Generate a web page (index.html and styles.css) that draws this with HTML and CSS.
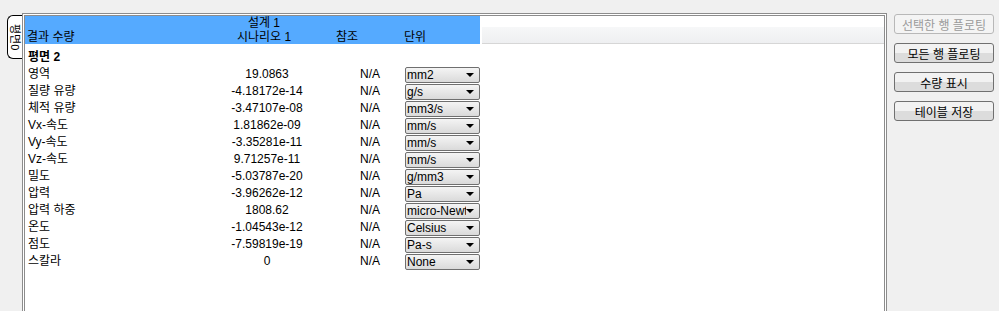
FILE: index.html
```html
<!DOCTYPE html>
<html lang="ko">
<head>
    <meta charset="UTF-8">
    <title>결과 수량</title>
    <link rel="stylesheet" href="styles.css">
</head>
<body>
    <div class="app">
        <!-- Side tab -->
        <div class="tab"><span class="tab-text">평면0</span></div>

        <!-- Results table panel -->
        <div class="panel">
            <div class="head">
                <div class="head-blue">
                    <div class="h-label">결과 수량</div>
                    <div class="h-value">설계 1<br>시나리오 1</div>
                    <div class="h-ref">참조</div>
                    <div class="h-unit">단위</div>
                </div>
                <div class="head-rest"><div class="head-strip"></div></div>
            </div>

            <div class="rows">
                <div class="row group"><span class="c-label">평면 2</span></div>
                <div class="row"><span class="c-label">영역</span><span class="c-value">19.0863</span><span class="c-ref">N/A</span><span class="c-unit"><span class="combo"><span class="combo-text">mm2</span></span></span></div>
                <div class="row"><span class="c-label">질량 유량</span><span class="c-value">-4.18172e-14</span><span class="c-ref">N/A</span><span class="c-unit"><span class="combo"><span class="combo-text">g/s</span></span></span></div>
                <div class="row"><span class="c-label">체적 유량</span><span class="c-value">-3.47107e-08</span><span class="c-ref">N/A</span><span class="c-unit"><span class="combo"><span class="combo-text">mm3/s</span></span></span></div>
                <div class="row"><span class="c-label">Vx-속도</span><span class="c-value">1.81862e-09</span><span class="c-ref">N/A</span><span class="c-unit"><span class="combo"><span class="combo-text">mm/s</span></span></span></div>
                <div class="row"><span class="c-label">Vy-속도</span><span class="c-value">-3.35281e-11</span><span class="c-ref">N/A</span><span class="c-unit"><span class="combo"><span class="combo-text">mm/s</span></span></span></div>
                <div class="row"><span class="c-label">Vz-속도</span><span class="c-value">9.71257e-11</span><span class="c-ref">N/A</span><span class="c-unit"><span class="combo"><span class="combo-text">mm/s</span></span></span></div>
                <div class="row"><span class="c-label">밀도</span><span class="c-value">-5.03787e-20</span><span class="c-ref">N/A</span><span class="c-unit"><span class="combo"><span class="combo-text">g/mm3</span></span></span></div>
                <div class="row"><span class="c-label">압력</span><span class="c-value">-3.96262e-12</span><span class="c-ref">N/A</span><span class="c-unit"><span class="combo"><span class="combo-text">Pa</span></span></span></div>
                <div class="row"><span class="c-label">압력 하중</span><span class="c-value">1808.62</span><span class="c-ref">N/A</span><span class="c-unit"><span class="combo"><span class="combo-text">micro-Newton</span></span></span></div>
                <div class="row"><span class="c-label">온도</span><span class="c-value">-1.04543e-12</span><span class="c-ref">N/A</span><span class="c-unit"><span class="combo"><span class="combo-text">Celsius</span></span></span></div>
                <div class="row"><span class="c-label">점도</span><span class="c-value">-7.59819e-19</span><span class="c-ref">N/A</span><span class="c-unit"><span class="combo"><span class="combo-text">Pa-s</span></span></span></div>
                <div class="row"><span class="c-label">스칼라</span><span class="c-value">0</span><span class="c-ref">N/A</span><span class="c-unit"><span class="combo"><span class="combo-text">None</span></span></span></div>
            </div>
        </div>

        <!-- Action buttons -->
        <div class="side">
            <button class="btn" disabled>선택한 행 플로팅</button>
            <button class="btn">모든 행 플로팅</button>
            <button class="btn">수량 표시</button>
            <button class="btn">테이블 저장</button>
        </div>
    </div>
</body>
</html>
```

FILE: styles.css
```css
/* overall window */
body {
    margin: 0;
    background: #f0f0f0;
    font-family: "Liberation Sans", "Noto Sans CJK KR", sans-serif;
    font-size: 12px;
    color: #000;
    overflow: hidden;
    height: 311px;
}

.app {
    display: flex;
    align-items: flex-start;
    height: 311px;
}

/* vertical tab at the left */
.tab {
    width: 14px;
    height: 42px;
    margin: 15px 0 0 7px;
    background: #fff;
    border: 1px solid #000;
    border-right: none;
    border-radius: 6px 0 0 6px;
    display: flex;
    align-items: center;
    justify-content: center;
    overflow: hidden;
}

.tab-text {
    writing-mode: vertical-rl;
    text-orientation: sideways;
    font-size: 11px;
    line-height: 12px;
    white-space: nowrap;
}

/* table panel */
.panel {
    width: 859px;
    height: 300px;
    margin-top: 13px;
    border: 3px double #8c8c8c;
    border-bottom: none;
    background: #fff;
}

.head {
    display: flex;
    height: 28px;
}

.head-blue {
    width: 455px;
    background: #55aaff;
    display: grid;
    grid-template-columns: 180px 118px 58px 99px;
    align-items: end;
    line-height: 14px;
}

.h-label {
    padding-left: 2px;
}

.h-value {
    text-align: center;
}

.h-ref {
    padding-left: 13px;
}

.h-unit {
    padding-left: 23px;
}

.head-rest {
    flex: 1;
    display: flex;
    flex-direction: column;
    justify-content: flex-end;
    padding-left: 2px;
}

.head-strip {
    height: 16px;
    background: linear-gradient(#f6f7f8, #eeeff1);
    border-bottom: 1px solid #d6d6d6;
}

/* data rows */
.rows {
    padding-top: 5px;
}

.row {
    display: grid;
    grid-template-columns: 182px 120px 53px 100px;
    align-items: center;
    height: 17px;
    line-height: 17px;
}

.group .c-label {
    font-weight: bold;
}

.c-label {
    padding-left: 3px;
    white-space: nowrap;
}

.c-value {
    text-align: center;
}

.c-ref {
    text-align: right;
}

.c-unit {
    padding-left: 25px;
    display: flex;
}

/* drop-down boxes */
.combo {
    display: flex;
    align-items: center;
    justify-content: space-between;
    width: 73px;
    height: 14px;
    border: 1px solid #6f6f6f;
    border-radius: 2px;
    background: linear-gradient(#f4f4f4, #dadada);
}

.combo-text {
    width: 59px;
    padding-left: 1px;
    line-height: 14px;
    overflow: hidden;
    white-space: nowrap;
}

.combo::after {
    content: "";
    margin-right: 5px;
    border-style: solid;
    border-width: 4px 4px 0 4px;
    border-color: #000 transparent transparent transparent;
}

/* right-hand buttons */
.side {
    display: flex;
    flex-direction: column;
    margin: 14px 0 0 7px;
    gap: 9px;
}

.btn {
    width: 100px;
    height: 20px;
    padding: 0;
    font-family: "Liberation Sans", "Noto Sans CJK KR", sans-serif;
    font-size: 12px;
    color: #000;
    border: 1px solid #707070;
    border-radius: 3px;
    background: linear-gradient(#f2f2f2 50%, #dcdcdc 50%);
}

.btn:disabled {
    color: #9a9a9a;
    border-color: #b8b8b8;
    background: #f4f4f4;
}
```
